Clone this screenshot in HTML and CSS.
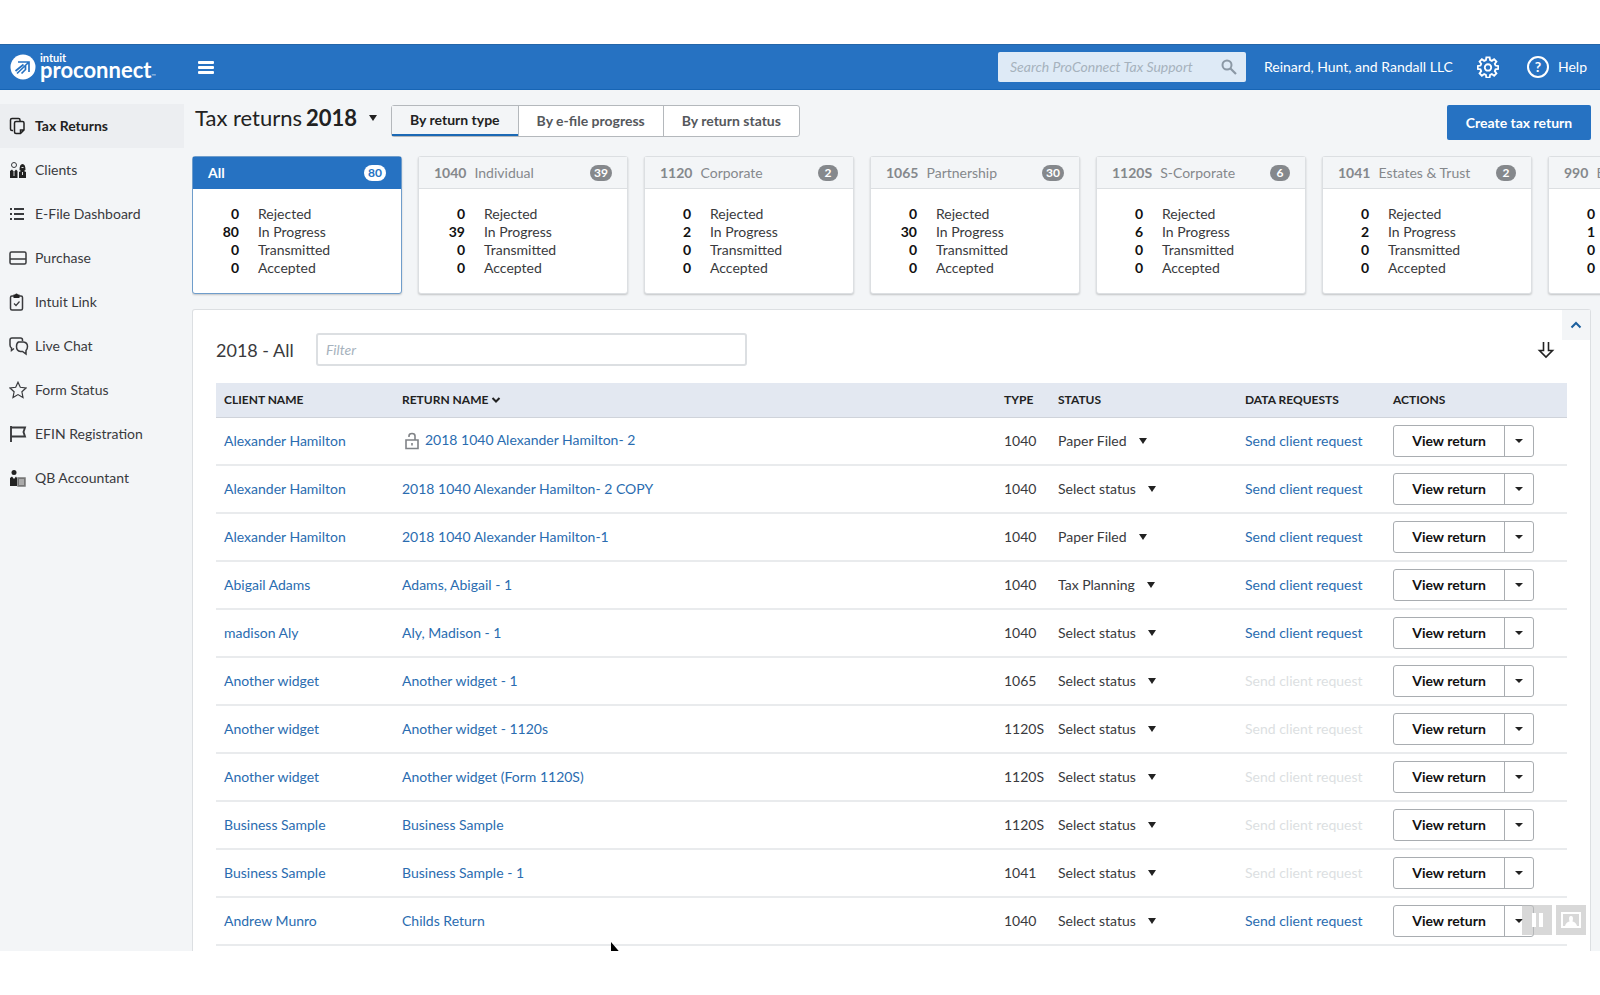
FILE: index.html
```html
<!DOCTYPE html>
<html lang="en">

<head>
    <meta charset="UTF-8">
    <meta name="viewport" content="width=device-width, initial-scale=1.0">
    <title>Tax Returns</title>
    <link rel="stylesheet" href="styles.css">
</head>

<body>
    <div class="app">
        <header class="topbar">
            <a href="#" class="logo">
                <svg class="logo-mark" viewBox="0 0 26 26">
                    <circle cx="13" cy="13" r="12.5" fill="#fff"/>
                    <path d="M8 8H19V18M5.500 17L13.500 10.500M7 19.500L18.500 8.500M11.500 19.500L15.500 15.500V12" fill="none" stroke="#2672c2" stroke-width="1.700"/>
                </svg>
                <span class="logo-text">
                    <span class="logo-small">intuit</span>
                    <span class="logo-big">proconnect<span class="tm">™</span></span>
                </span>
            </a>
            <button class="menu-btn" aria-label="Menu"><span></span><span></span><span></span></button>
            <div class="top-right">
                <div class="search">
                    <input type="text" placeholder="Search ProConnect Tax Support" aria-label="Search ProConnect Tax Support">
                    <svg viewBox="0 0 16 16"><circle cx="6" cy="6" r="4.500"/><path d="M9.500 9.500L15 15" stroke-width="2.200"/></svg>
                </div>
                <a href="#" class="firm">Reinard, Hunt, and Randall LLC</a>
                <button class="gear" aria-label="Settings">
                    <svg viewBox="0 0 24 24"><path d="M10.200 1.500h3.600l.5 3 1.900.8 2.500-1.800 2.500 2.500-1.800 2.500.8 1.900 3 .5v3.200l-3 .5-.8 1.900 1.800 2.500-2.500 2.500-2.500-1.800-1.900.8-.5 3h-3.600l-.5-3-1.900-.8-2.500 1.800-2.500-2.500 1.800-2.500-.8-1.900-3-.5v-3.200l3-.5.8-1.900-1.800-2.500 2.500-2.500 2.500 1.800 1.900-.8z"/><circle cx="12" cy="12.500" r="3.500"/></svg>
                </button>
                <a href="#" class="help"><span class="help-icon">?</span>Help</a>
            </div>
        </header>

        <div class="body">
            <nav class="sidebar">
                <a href="#" class="active">
                    <svg viewBox="0 0 18 18"><path d="M4 13.500H3Q1.500 13.500 1.500 12V3Q1.500 1.500 3 1.500H9.500Q11 1.500 11 3V4M7 4.500H13.500Q15 4.500 15 6V13L11.500 16.500H7Q5.500 16.500 5.500 15V6Q5.500 4.500 7 4.500ZM11.500 16.500V13H15"/></svg>
                    Tax Returns
                </a>
                <a href="#">
                    <svg viewBox="0 0 18 18"><circle cx="5" cy="4" r="2.500" stroke-width="1"/><path class="solid" d="M1 17V10L3 8.500L5 11L7 8.500L8.500 10V17ZM10 17V11L12 10H15L17 11V17ZM10.500 9Q10.500 3 13.500 3Q16.500 3 16.500 9L15 10H12Z"/><path class="light" d="M5 11V15M13.500 11V14M12.500 6.500H14.500"/></svg>
                    Clients
                </a>
                <a href="#">
                    <svg viewBox="0 0 18 18"><path d="M1 4H3M5 4H15M1 9H3M5 9H15M1 14H3M5 14H15" stroke-width="2"/></svg>
                    E-File Dashboard
                </a>
                <a href="#">
                    <svg viewBox="0 0 18 18"><rect x="1" y="3" width="16" height="12" rx="1.500"/><path d="M1 10H17"/></svg>
                    Purchase
                </a>
                <a href="#">
                    <svg viewBox="0 0 18 18"><rect x="1.500" y="3" width="12" height="14" rx="1.500"/><path class="solid" d="M4.500 1.500H6Q7.500 -0.500 9 1.500H10.500V5H4.500Z"/><path d="M5 10.500L7 12.500L10.500 8.500" stroke-width="1.200"/></svg>
                    Intuit Link
                </a>
                <a href="#">
                    <svg class="chat" viewBox="0 0 18 18"><path d="M5 11.500L2.500 13.500V11Q1 10 1 8V3Q1 1 3 1H11.500Q13.500 1 13.500 3V4M9.500 5H14.500Q18.500 5.500 18.500 9.500Q18.500 12 17 13.500V17L13.500 14.500H11.500Q7.500 14 7.500 9.500Q7.500 6 9.500 5Z"/></svg>
                    Live Chat
                </a>
                <a href="#">
                    <svg viewBox="0 0 18 18"><path d="M9 1.200L11.300 6.300L17 7L12.900 10.800L14 16.500L9 13.600L4 16.500L5.100 10.800L1 7L6.700 6.300Z" stroke-width="1.200"/></svg>
                    Form Status
                </a>
                <a href="#">
                    <svg viewBox="0 0 18 18"><path d="M2 1V17M2 2.500H16L14.500 7L16 11.500H2" stroke-width="1.900"/></svg>
                    EFIN Registration
                </a>
                <a href="#">
                    <svg viewBox="0 0 18 18"><circle class="solid" cx="5" cy="3.500" r="2.500"/><path class="solid" d="M1 17V9L3 7.500L5 10L7 7.500L8 9V17Z"/><path d="M9 17V9H16V17Z" fill="#777" stroke="#777"/><path class="light" d="M10 11H15M10 13H15M10 15H15"/></svg>
                    QB Accountant
                </a>
            </nav>

            <main class="main">
                <div class="title-row">
                    <h1>
                        <label for="year">Tax returns</label>
                        <span class="dropdown year">
                            <select id="year"><option>2018</option></select>
                        </span>
                    </h1>
                    <div class="tabs">
                        <button class="selected">By return type</button>
                        <button>By e-file progress</button>
                        <button>By return status</button>
                    </div>
                    <button class="create-btn">Create tax return</button>
                </div>

                <div class="cards" id="cards"></div>

                <section class="panel">
                    <button class="collapse" aria-label="Collapse">
                        <svg viewBox="0 0 12 8"><path d="M1.500 6.500L6 2L10.500 6.500"/></svg>
                    </button>
                    <div class="panel-head">
                        <h2><label for="filter">2018 - All</label></h2>
                        <input type="text" id="filter" placeholder="Filter">
                        <button class="export" aria-label="Export">
                            <svg viewBox="0 0 18 18"><path d="M6.500 1V9.500H2.500L9 16L15.500 9.500H11.500V1"/></svg>
                        </button>
                    </div>
                    <table>
                        <thead>
                            <tr>
                                <th class="col-client">Client name</th>
                                <th>Return name
                                    <svg class="sort" viewBox="0 0 10 8"><path d="M1.500 2L5 5.500L8.500 2"/></svg>
                                </th>
                                <th class="col-type">Type</th>
                                <th class="col-status">Status</th>
                                <th class="col-data">Data requests</th>
                                <th class="col-actions">Actions</th>
                            </tr>
                        </thead>
                        <tbody id="rows"></tbody>
                    </table>
                </section>
            </main>
        </div>

        <div class="player">
            <button aria-label="Pause"><svg viewBox="0 0 30 30"><path d="M10 8H14V22H10ZM17 8H21V22H17Z" fill="#fff"/></svg></button>
            <button aria-label="Picture"><svg viewBox="0 0 30 30"><path d="M6 8H24V22H6Z" fill="none" stroke="#fff" stroke-width="2"/><path d="M9 21Q10 17 13.500 16.500Q12 11 15 11Q18 11 16.500 16.500Q20 17 21 21Z" fill="#fff"/></svg></button>
        </div>
        <svg class="cursor" viewBox="0 0 12 18"><path d="M1 0V15L4.500 11.500L10 10.500Z"/></svg>
    </div>
    <script src="script.js"></script>
</body>

</html>
```

FILE: styles.css
```css
:root {
    --blue: #2672c2;
    --link: #2a6cb0;
    --grey: #f3f5f7;
    --line: #dcdfe2;
    --text: #393a3d;
}

* {
    box-sizing: border-box;
}

body {
    margin: 0;
    background: #fff;
    color: var(--text);
    font-family: Lato, "Open Sans", sans-serif;
    font-size: 14px;
    line-height: 18px;
}

a {
    color: var(--link);
    text-decoration: none;
}

button,
input,
select {
    font: inherit;
    color: inherit;
}

button {
    padding: 0;
    border: none;
    background: none;
    cursor: pointer;
}

svg {
    display: block;
    fill: none;
    stroke: currentColor;
}

.app {
    position: relative;
    display: flex;
    flex-direction: column;
    height: calc(100vh - 88px);
    margin: 44px 0;
    overflow: hidden;
    background: var(--grey);
}

/* top bar */
.topbar {
    flex: none;
    display: flex;
    align-items: center;
    height: 46px;
    padding: 0 13px 0 10px;
    background: var(--blue);
    border-top: 1px solid #2566a8;
    border-bottom: 1px solid #1765b5;
    color: #fff;
}

.topbar a {
    color: #fff;
}

.logo {
    display: flex;
    align-items: center;
    gap: 4px;
    width: 188px;
}

.logo-mark {
    width: 26px;
    height: 26px;
    stroke: none;
}

.logo-text {
    display: flex;
    flex-direction: column;
    padding-top: 2px;
    font-weight: bold;
}

.logo-small {
    font-size: 11px;
    line-height: 10px;
}

.logo-big {
    font-size: 22px;
    line-height: 14px;
}

.tm {
    font-size: 6px;
    opacity: 0.6;
}

.menu-btn {
    display: flex;
    flex-direction: column;
    gap: 2px;
    width: 16px;
}

.menu-btn span {
    height: 3px;
    border-radius: 1px;
    background: #fff;
}

.top-right {
    display: flex;
    align-items: center;
    margin-left: auto;
}

.search {
    display: flex;
    align-items: center;
    width: 248px;
    height: 30px;
    margin-right: 18px;
    padding: 0 9px 0 12px;
    border-radius: 2px;
    background: #deeaf6;
    color: #8b98a5;
}

.search input {
    flex: 1;
    min-width: 0;
    padding: 0;
    border: none;
    outline: none;
    background: none;
}

.search svg {
    width: 16px;
    height: 16px;
    stroke-width: 2;
}

::placeholder {
    color: #a6b2bd;
    font-style: italic;
    opacity: 1;
}

.gear {
    margin: 0 28px 0 24px;
}

.gear svg {
    width: 22px;
    height: 22px;
    stroke-width: 2;
}

.help {
    display: flex;
    align-items: center;
    gap: 9px;
}

.help-icon {
    width: 22px;
    height: 22px;
    border: 2px solid #fff;
    border-radius: 50%;
    font-weight: bold;
    text-align: center;
}

.body {
    flex: 1;
    display: flex;
    min-height: 0;
}

/* sidebar */
.sidebar {
    flex: none;
    width: 184px;
    padding-top: 14px;
}

.sidebar a {
    display: flex;
    align-items: center;
    gap: 8px;
    height: 44px;
    padding-left: 9px;
    color: var(--text);
}

.sidebar a.active {
    background: #eceef1;
    color: #222;
    font-weight: bold;
}

.sidebar svg {
    flex: none;
    width: 18px;
    height: 18px;
    stroke-width: 1.5;
}

.sidebar .chat {
    overflow: visible;
}

.sidebar .solid {
    fill: #222;
    stroke: none;
}

.sidebar .light {
    stroke: #ddd;
    stroke-width: 1;
}

/* main */
.main {
    flex: 1;
    display: flex;
    flex-direction: column;
    min-width: 0;
    padding: 15px 9px 0 8px;
}

.title-row {
    display: flex;
    align-items: flex-start;
    height: 51px;
}

h1 {
    display: flex;
    align-items: center;
    gap: 4px;
    width: 199px;
    margin: 0;
    padding-left: 3px;
    color: #222;
    font-size: 22px;
    font-weight: normal;
    line-height: 26px;
    white-space: nowrap;
}

.dropdown {
    display: inline-flex;
    align-items: center;
    gap: 12px;
}

.dropdown::after {
    content: "";
    border: 4px solid transparent;
    border-top: 6px solid #222;
    border-bottom: none;
}

.dropdown select {
    appearance: none;
    field-sizing: content;
    padding: 0;
    border: none;
    background: none;
}

.year select {
    font-weight: bold;
}

.tabs {
    display: flex;
    border: 1px solid #b4b8bc;
    border-radius: 3px;
    background: #fff;
    font-weight: bold;
}

.tabs button {
    height: 30px;
    padding: 0 18px;
    border-left: 1px solid #b4b8bc;
    color: #55585c;
}

.tabs button:first-child {
    border-left: none;
}

.tabs .selected {
    border-bottom: 2px solid #1b69b5;
    background: var(--grey);
    color: #222;
}

.create-btn {
    width: 144px;
    height: 35px;
    margin-left: auto;
    border-radius: 2px;
    background: var(--blue);
    color: #fff;
    font-weight: bold;
}

.cards {
    flex: none;
    display: flex;
    gap: 16px;
    margin-right: -9px;
    overflow: hidden;
    padding-bottom: 3px;
}

.card {
    flex: none;
    width: 210px;
    height: 138px;
    border: 1px solid var(--line);
    border-radius: 3px;
    background: #fff;
    box-shadow: 0 1px 2px rgba(0, 0, 0, 0.2);
}

.card-head {
    display: flex;
    align-items: center;
    gap: 8px;
    height: 32px;
    padding: 0 15px;
    border-bottom: 1px solid var(--line);
    background: var(--grey);
    color: #85888c;
}

.badge {
    min-width: 20px;
    height: 16px;
    margin-left: auto;
    padding: 0 4px;
    border-radius: 8px;
    background: #85888c;
    color: #fff;
    font-size: 12px;
    font-weight: bold;
    line-height: 16px;
    text-align: center;
}

.card.current {
    border-color: #6f9dcb;
}

.current .card-head {
    border-color: var(--blue);
    background: var(--blue);
    color: #fff;
    font-weight: bold;
}

.current .badge {
    background: #fff;
    color: var(--blue);
}

.card dl {
    display: grid;
    grid-template-columns: 46px 1fr;
    column-gap: 19px;
    margin: 0;
    padding-top: 16px;
}

.card dt {
    color: #111;
    font-weight: bold;
    text-align: right;
}

.card dd {
    margin: 0;
}

/* returns table */
.panel {
    flex: 1;
    position: relative;
    margin-top: 12px;
    padding: 23px 23px 0;
    border: 1px solid var(--line);
    border-bottom: none;
    border-radius: 3px 3px 0 0;
    background: #fff;
}

.collapse {
    position: absolute;
    top: 0;
    right: 0;
    display: grid;
    place-items: center;
    width: 28px;
    height: 30px;
    background: var(--grey);
    color: #1b5f9e;
}

.collapse svg {
    width: 12px;
    height: 8px;
    stroke-width: 2;
}

.panel-head {
    display: flex;
    align-items: center;
    padding-right: 12px;
}

h2 {
    width: 100px;
    margin: 0;
    font-size: 18px;
    font-weight: normal;
    line-height: 24px;
}

#filter {
    width: 431px;
    height: 33px;
    padding: 0 8px;
    border: 2px solid var(--line);
    border-radius: 3px;
}

.export {
    margin-left: auto;
    color: #222;
}

.export svg {
    width: 18px;
    height: 18px;
    stroke-width: 1.6;
}

table {
    width: 100%;
    margin-top: 17px;
    border-collapse: collapse;
    table-layout: fixed;
}

th,
td {
    padding: 0 0 0 8px;
    text-align: left;
    white-space: nowrap;
}

th {
    height: 34px;
    background: #e3e8f1;
    border-bottom: 1px solid #cfd3da;
    color: #222;
    font-size: 12px;
    text-transform: uppercase;
}

td {
    height: 48px;
    border-bottom: 2px solid #e9ebed;
}

.sort {
    display: inline-block;
    width: 10px;
    height: 8px;
    stroke-width: 2;
}

.col-client {
    width: 178px;
}

.col-type {
    width: 54px;
}

.col-status {
    width: 187px;
}

.col-data {
    width: 148px;
}

.col-actions {
    width: 182px;
}

.lock {
    display: inline-block;
    width: 16px;
    height: 18px;
    margin: 0 5px 0 2px;
    color: #808387;
    stroke-width: 1.6;
    vertical-align: middle;
}

.send-off {
    color: #dcdfe2;
}

.split {
    display: inline-flex;
    height: 32px;
    border: 1px solid #a9adb1;
    border-radius: 3px;
    background: #fff;
    color: #111;
    vertical-align: middle;
}

.split button {
    width: 110px;
    font-weight: bold;
}

.split .more {
    display: grid;
    place-items: center;
    width: 29px;
    border-left: 1px solid #a9adb1;
}

.more::after {
    content: "";
    border: 4px solid transparent;
    border-top-color: #222;
    border-bottom: none;
}

/* on top of the page */
.player {
    position: absolute;
    right: 14px;
    bottom: 16px;
    display: flex;
    gap: 4px;
}

.player button {
    width: 30px;
    height: 30px;
    background: rgba(190, 190, 190, 0.6);
}

.player svg {
    stroke: none;
}

.cursor {
    position: absolute;
    bottom: -9px;
    left: 610px;
    width: 12px;
    height: 18px;
    fill: #000;
    stroke: none;
}
```

FILE: script.js
```js
const cards = [
    ['', 'All', 80, 80],
    ['1040', 'Individual', 39, 39],
    ['1120', 'Corporate', 2, 2],
    ['1065', 'Partnership', 30, 30],
    ['1120S', 'S-Corporate', 6, 6],
    ['1041', 'Estates &amp; Trust', 2, 2],
    ['990', 'Exempt', 1, 1]
];

// client, return name, type, status, can send a request
const returns = [
    ['Alexander Hamilton', '2018 1040 Alexander Hamilton- 2', '1040', 'Paper Filed', true],
    ['Alexander Hamilton', '2018 1040 Alexander Hamilton- 2 COPY', '1040', 'Select status', true],
    ['Alexander Hamilton', '2018 1040 Alexander Hamilton-1', '1040', 'Paper Filed', true],
    ['Abigail Adams', 'Adams, Abigail - 1', '1040', 'Tax Planning', true],
    ['madison Aly', 'Aly, Madison - 1', '1040', 'Select status', true],
    ['Another widget', 'Another widget - 1', '1065', 'Select status', false],
    ['Another widget', 'Another widget - 1120s', '1120S', 'Select status', false],
    ['Another widget', 'Another widget (Form 1120S)', '1120S', 'Select status', false],
    ['Business Sample', 'Business Sample', '1120S', 'Select status', false],
    ['Business Sample', 'Business Sample - 1', '1041', 'Select status', false],
    ['Andrew Munro', 'Childs Return', '1040', 'Select status', true]
];

const lock = '<svg class="lock" viewBox="0 0 16 18"><path d="M2 8H14V16.500H2ZM5 5V4Q5 1.500 8 1.500Q11 1.500 11 4V8M8 11V13.500"/></svg>';

document.getElementById('cards').innerHTML = cards.map(([code, name, total, progress], i) => `
    <article class="card ${i === 0 ? 'current' : ''}">
        <div class="card-head">
            ${code ? `<strong>${code}</strong>` : ''}<span>${name}</span>
            <span class="badge">${total}</span>
        </div>
        <dl>
            <dt>0</dt><dd>Rejected</dd>
            <dt>${progress}</dt><dd>In Progress</dd>
            <dt>0</dt><dd>Transmitted</dd>
            <dt>0</dt><dd>Accepted</dd>
        </dl>
    </article>`).join('');

document.getElementById('rows').innerHTML = returns.map(([client, name, type, status, canSend], i) => `
    <tr>
        <td><a href="#">${client}</a></td>
        <td>${i === 0 ? lock : ''}<a href="#">${name}</a></td>
        <td>${type}</td>
        <td><span class="dropdown"><select aria-label="Status"><option>${status}</option></select></span></td>
        <td>${canSend ? '<a href="#">Send client request</a>' : '<span class="send-off">Send client request</span>'}</td>
        <td><span class="split"><button>View return</button><button class="more" aria-label="More actions"></button></span></td>
    </tr>`).join('');
```
